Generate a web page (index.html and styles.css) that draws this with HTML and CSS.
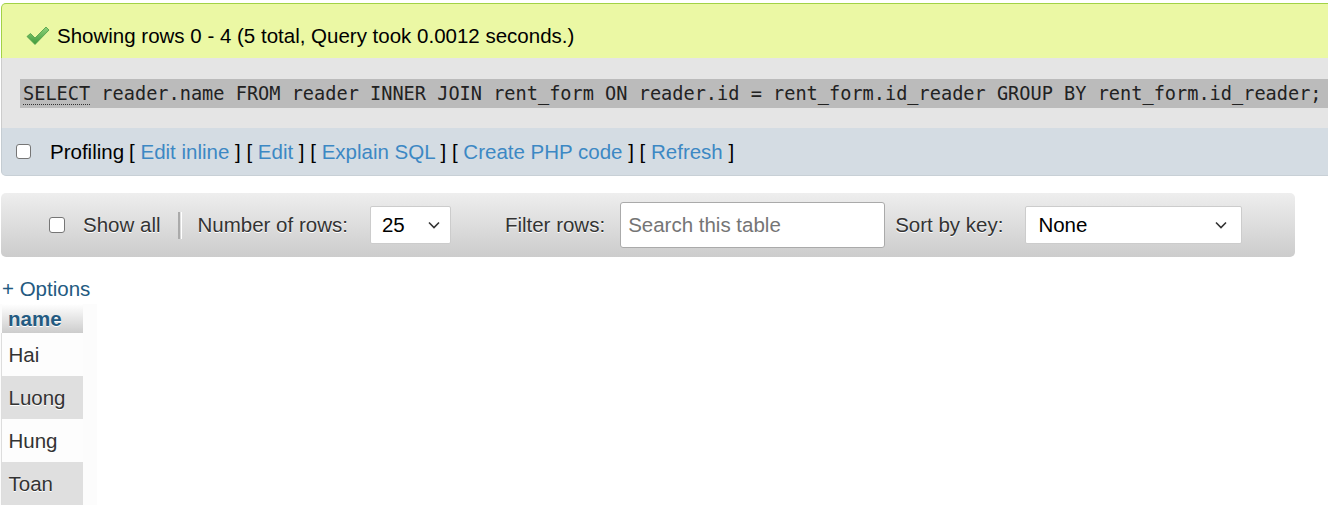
FILE: index.html
```html
<!DOCTYPE html>
<html>
<head>
<meta charset="utf-8">
<link rel="stylesheet" href="styles.css">
</head>
<body>
<div class="result">
  <div class="success">
    <svg class="check" width="24" height="20" viewBox="0 0 24 20">
      <defs>
        <linearGradient id="g" x1="0" y1="0" x2="0" y2="1">
          <stop offset="0" stop-color="#8fd27a"/>
          <stop offset="1" stop-color="#3e9a3a"/>
        </linearGradient>
      </defs>
      <path d="M1 10.5 L4.5 7.5 L9 12 L20 1 L23 4 L9 18.5 Z" fill="url(#g)" stroke="#4a9c45" stroke-width="0.8" stroke-linejoin="round"/>
    </svg>
    <span>Showing rows 0 - 4 (5 total, Query took 0.0012 seconds.)</span>
  </div>
  <div class="sqlbox">
    <div class="code"><span class="kw">SELECT</span> reader.name FROM reader INNER JOIN rent_form ON reader.id = rent_form.id_reader GROUP BY rent_form.id_reader;</div>
  </div>
  <div class="tools">
    <span class="cb"></span>
    <span class="label">Profiling</span>
    <span class="links">[ <a>Edit inline</a> ] [ <a>Edit</a> ] [ <a>Explain SQL</a> ] [ <a>Create PHP code</a> ] [ <a>Refresh</a> ]</span>
  </div>
</div>

<div class="navbar">
  <span class="cb cb-nav"></span>
  <span class="txt">Show all</span>
  <span class="sep"></span>
  <span class="txt">Number of rows:</span>
  <div class="select sel-rows"><span>25</span><svg width="12" height="8" viewBox="0 0 12 8"><path d="M1 1.5 L6 6.5 L11 1.5" fill="none" stroke="#333" stroke-width="1.6"/></svg></div>
  <span class="txt filter">Filter rows:</span>
  <div class="input">Search this table</div>
  <span class="txt">Sort by key:</span>
  <div class="select sel-sort"><span>None</span><svg width="12" height="8" viewBox="0 0 12 8"><path d="M1 1.5 L6 6.5 L11 1.5" fill="none" stroke="#333" stroke-width="1.6"/></svg></div>
</div>

<div class="options">+ Options</div>
<div class="tablewrap">
  <table class="data">
    <thead><tr><th>name</th></tr></thead>
    <tbody>
      <tr class="odd"><td>Hai</td></tr>
      <tr class="even"><td>Luong</td></tr>
      <tr class="odd"><td>Hung</td></tr>
      <tr class="even"><td>Toan</td></tr>
    </tbody>
  </table>
</div>
</body>
</html>
```
FILE: styles.css
```css
html, body {
  margin: 0;
  padding: 0;
  background: #fff;
  overflow: hidden;
}
body {
  font-family: "Liberation Sans", Arial, sans-serif;
  font-size: 20.5px;
  color: #000;
  width: 1328px;
  height: 512px;
}
.result {
  margin: 3px -40px 0 1px;
}
.success {
  height: 54px;
  background: #ebf8a4;
  border: 1px solid #a2d246;
  border-bottom: none;
  border-top-left-radius: 5px;
  display: flex;
  align-items: center;
  padding-left: 24px;
  gap: 7px;
  box-sizing: content-box;
}
.success span {
  color: #000;
  position: relative;
  top: 5px;
}
.check {
  flex: none;
  position: relative;
  top: 5px;
}
.sqlbox {
  background: #e5e5e5;
  border-left: 1px solid #ccc;
  height: 70px;
  display: flex;
  align-items: center;
}
.code {
  margin-left: 18px;
  flex: 1;
  background: #bbb;
  height: 29px;
  line-height: 29px;
  padding-left: 3px;
  font-family: "DejaVu Sans Mono", "Liberation Mono", monospace;
  font-size: 18.6px;
  color: #222;
  white-space: nowrap;
}
.kw {
  border-bottom: 1px dotted #333;
}
.tools {
  background: #d4dce3;
  height: 47px;
  border-left: 1px solid #c4ccd2;
  border-bottom: 1px solid #c8d0d6;
  border-bottom-left-radius: 5px;
  display: flex;
  align-items: center;
  padding-left: 14px;
  color: #000;
}
.cb {
  width: 13px;
  height: 13px;
  border: 1.5px solid #767676;
  border-radius: 3px;
  background: #fff;
  flex: none;
}
.tools .label {
  margin-left: 19px;
  margin-right: 5px;
}
.links {
  color: #000;
}
.links a {
  color: #3c88c4;
}

.navbar {
  margin: 17px 0 0 1px;
  width: 1294px;
  height: 64px;
  border-radius: 5px;
  background: linear-gradient(#eeeeee, #cccccc);
  display: flex;
  align-items: center;
  color: #333;
  text-shadow: 0 1px 0 #fff;
}
.cb-nav {
  width: 14px;
  height: 14px;
  margin-left: 48px;
  margin-right: 18px;
}
.sep {
  width: 1px;
  height: 27px;
  border-left: 2px solid #aaa;
  border-right: 1px solid #fff;
  margin: 0 16px 0 17px;
}
.select {
  border: 1px solid #ccc;
  border-radius: 2px;
  background: #fff;
  display: flex;
  align-items: center;
  justify-content: space-between;
  padding: 0 10px 0 11px;
  box-sizing: border-box;
  color: #000;
  text-shadow: none;
  height: 38px;
}
.sel-rows {
  width: 81px;
  margin-left: 22px;
}
.filter {
  margin-left: 54px;
}
.input {
  width: 265px;
  height: 46px;
  box-sizing: border-box;
  border: 1px solid #aaa;
  border-radius: 3px;
  background: #fff;
  margin-left: 15px;
  margin-right: 10px;
  padding-left: 7px;
  display: flex;
  align-items: center;
  color: #757575;
  text-shadow: none;
}
.sel-sort {
  width: 217px;
  margin-left: 22px;
  padding-left: 12px;
  padding-right: 14px;
}

.options {
  margin: 20px 0 0 2px;
  color: #235a81;
  line-height: 23px;
}
.tablewrap {
  width: 97px;
  background: #fcfcfc;
  margin-top: 4px;
}
.data {
  border-collapse: collapse;
  border-left: 1px solid #ddd;
}
.data th {
  width: 82px;
  height: 29px;
  box-sizing: border-box;
  text-align: left;
  padding: 0 6px;
  font-weight: bold;
  color: #235a81;
  background: linear-gradient(#ffffff, #cccccc);
  text-shadow: 0 1px 0 #fff;
  border-left: 2px solid #fcfcfc;
}
.data td {
  height: 43px;
  padding: 0 8px 0 7px;
  color: #333;
  text-shadow: 0 1px 0 #fff;
}
.data tr.odd td {
  background: #fdfdfd;
}
.data tr.even td {
  background: #dfdfdf;
}
```
